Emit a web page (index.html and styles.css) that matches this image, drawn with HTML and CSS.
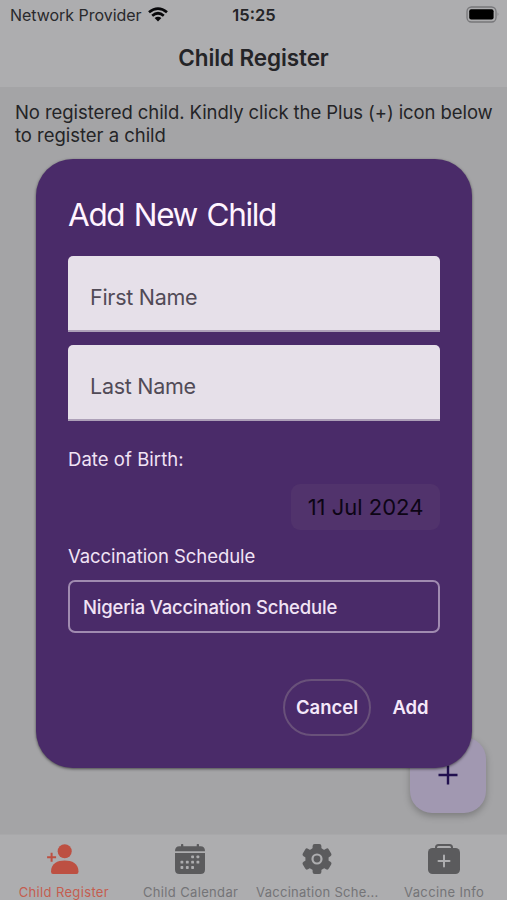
FILE: index.html
```html
<!DOCTYPE html>
<html lang="en">
<head>
<meta charset="utf-8">
<title>Child Register</title>
<link rel="stylesheet" href="styles.css">
</head>
<body>
<div class="app">
  <header class="header">
    <div class="status">
      <div class="carrier"><span class="carrier-name">Network Provider</span>
        <svg class="wifi" viewBox="0 0 20 15" width="20" height="15" fill="none" stroke="#08080a" stroke-width="2.7"><path d="M1 5.3Q10-2.2 19 5.3M4.2 8.7Q10 3.8 15.8 8.7"/><path d="M10 14.4L6.6 11Q10 8.3 13.4 11Z" fill="#08080a" stroke="none"/></svg>
      </div>
      <time class="clock">15:25</time>
      <svg class="battery" viewBox="0 0 34 17" width="34" height="17"><rect x="1" y="1" width="29" height="15" rx="4.5" fill="none" stroke="#77777a" stroke-width="1.3"/><rect x="3.2" y="3.3" width="24.4" height="10.2" rx="2" fill="#000"/><path d="M31.7 6.3Q33.4 8.3 31.7 10.3Z" fill="#77777a"/></svg>
    </div>
    <h1 class="title"><span>Child Register</span></h1>
  </header>
  <main class="content"><p class="empty"><span class="line1">No registered child. Kindly click the Plus (+) icon below</span><br><span class="line2">to register a child</span></p></main>
  <nav class="tabs">
    <a class="tab active"><svg viewBox="0 0 32 32" width="32" height="32" fill="currentColor"><circle cx="17.7" cy="8.2" r="7"/><path d="M4 28.5C4 20.5 10.5 17.5 17.7 17.5S31.500 20.500 31.500 28.500Q31.500 31 29.500 31H6Q4 31 4 28.500Z"/><path d="M4.600 9.800v9M.1 14.300h9" fill="none" stroke="currentColor" stroke-width="2"/></svg><span class="t1">Child Register</span></a>
    <a class="tab"><svg viewBox="0 0 32 32" width="32" height="32"><path fill="currentColor" d="M5.5 3.2H7V1.7q0-.7.8-.7h.8q.7 0 .7.7v1.500h13.400V1.700q0-.7.8-.7h.8q.7 0 .7.7v1.500H26.500q4.500 0 4.500 5H1q0-5 4.500-5ZM1 10h30v16.500q0 4.500-4.500 4.500h-21Q1 31 1 26.500Z"/><g fill="#adadaf"><rect x="17.2" y="12.5" width="2.8" height="2.8" rx=".7"/><rect x="22.5" y="12.5" width="2.8" height="2.8" rx=".7"/><rect x="6.5" y="17.8" width="2.8" height="2.8" rx=".7"/><rect x="11.9" y="17.8" width="2.8" height="2.8" rx=".7"/><rect x="17.2" y="17.8" width="2.8" height="2.8" rx=".7"/><rect x="22.5" y="17.8" width="2.8" height="2.8" rx=".7"/><rect x="6.5" y="23.1" width="2.8" height="2.8" rx=".7"/><rect x="11.9" y="23.1" width="2.8" height="2.8" rx=".7"/><rect x="17.2" y="23.1" width="2.8" height="2.8" rx=".7"/></g></svg><span class="t2">Child Calendar</span></a>
    <a class="tab"><svg viewBox="0 0 32 32" width="32" height="32"><circle cx="16" cy="16" r="11.6" fill="currentColor"/><g fill="currentColor"><rect id="tooth" x="11.6" y="1" width="8.8" height="30" rx="2"/><use href="#tooth" transform="rotate(60 16 16)"/><use href="#tooth" transform="rotate(120 16 16)"/></g><circle cx="16" cy="16" r="4.5" fill="none" stroke="#adadaf" stroke-width="2.2"/></svg><span class="t3">Vaccination Sche...</span></a>
    <a class="tab"><svg viewBox="0 0 32 32" width="32" height="32"><rect x="0" y="5" width="32" height="26" rx="4.5" fill="currentColor"/><path d="M8 6V4.500Q8 2 10.500 2h11Q24 2 24 4.500V6" fill="none" stroke="currentColor" stroke-width="2"/><path d="M16 12.500v11M10.500 18h11" stroke="#adadaf" stroke-width="2" stroke-linecap="round"/></svg><span class="t4">Vaccine Info</span></a>
  </nav>
  <button class="fab" aria-label="Register child"><svg viewBox="0 0 20 20" width="20" height="20" stroke="#21104f" stroke-width="2.4"><path d="M10 .5v19M.5 10h19"/></svg></button>
  <section class="dialog">
    <h2 class="heading"><span>Add New Child</span></h2>
    <div class="field"><span class="f1">First Name</span></div>
    <div class="field"><span class="f2">Last Name</span></div>
    <div class="label dob"><span>Date of Birth:</span></div>
    <div class="date"><span>11 Jul 2024</span></div>
    <div class="label schedule"><span>Vaccination Schedule</span></div>
    <div class="select"><span>Nigeria Vaccination Schedule</span></div>
    <div class="actions"><button class="cancel"><span>Cancel</span></button><button class="add"><span>Add</span></button></div>
  </section>
</div>
</body>
</html>
```
FILE: styles.css
```css
* { box-sizing: border-box; }
body { margin: 0; font-family: Inter, "Liberation Sans", sans-serif; }
h1, h2, p { margin: 0; font-weight: 400; }
button { font: inherit; border: 0; padding: 0; background: none; }
svg { display: block; flex: none; }
span { white-space: nowrap; }
.app { position: relative; width: 507px; height: 900px; overflow: hidden; display: flex; flex-direction: column; background: #a4a4a6; color: #242427; }
.header { height: 87px; background: #adadaf; }
.status { display: grid; grid-template-columns: 1fr auto 1fr; height: 30px; align-items: center; padding: 0 7px 0 10px; }
.carrier { display: flex; align-items: center; gap: 6px; font-size: 16px; letter-spacing: -.03px; color: #29292c; }
.carrier svg { margin-top: -2px; }
.clock { margin-left: -2px; font-size: 16.5px; font-weight: 600; line-height: 30px; }
.battery { justify-self: end; margin-top: -2px; }
.title { height: 56px; line-height: 56px; text-align: center; font-size: 22.5px; font-weight: 600; letter-spacing: -.1px; }
.content { flex: 1; padding: 14px 14px 0 15px; }
.empty { font-size: 18.5px; line-height: 23px; }
.line1 { letter-spacing: -.08px; }
.line2 { letter-spacing: -.03px; }
.tabs { height: 66px; background: #adadaf; border-top: 1px solid #a8a8aa; display: grid; grid-template-columns: repeat(4, 1fr); color: #5b5b5d; }
.tab { display: flex; flex-direction: column; align-items: center; padding-top: 8px; }
.tab span { font-size: 13px; line-height: 16px; margin: 9px 0 0 1px; color: #747477; letter-spacing: .35px; }
.tab .t3 { letter-spacing: .27px; }
.active { color: #bd5042; }
.tab.active span { color: #c45d50; }
.fab { position: absolute; left: 410px; top: 737px; width: 76px; height: 76px; border-radius: 22px; background: #a198b1; box-shadow: 0 3px 7px rgba(0,0,0,.25); display: flex; align-items: center; justify-content: center; }
.dialog { position: absolute; left: 36px; top: 159px; width: 436px; height: 609px; border-radius: 37px; padding: 34px 32px 0; background: #4a2b69; box-shadow: 0 1px 3px rgba(0,0,0,.55); color: #f1e3f5; }
.heading { height: 42px; line-height: 44px; font-size: 31.5px; letter-spacing: -1.35px; word-spacing: 2px; color: #fff4ff; margin-bottom: 21px; }
.field { height: 76px; padding: 8px 22px 0; margin-bottom: 13px; border-radius: 5px 5px 0 0; border-bottom: 2px solid #ada0b8; background: #e6e0e9; color: #514b57; font-size: 21.5px; letter-spacing: -.28px; display: flex; align-items: center; }
.label { font-size: 18.5px; line-height: 24px; }
.dob { margin-top: 26px; letter-spacing: .05px; }
.date { margin: 13px 0 0 auto; width: 149px; height: 46px; border-radius: 9px; background: #51336c; color: #0d0515; font-size: 22px; display: flex; align-items: center; justify-content: center; }
.schedule { margin-top: 14px; letter-spacing: -.07px; }
.select { margin-top: 12px; height: 53px; border: 2px solid #a08bb0; border-radius: 7px; padding-left: 13px; font-size: 18.5px; letter-spacing: -.2px; font-weight: 500; display: flex; align-items: center; }
.actions { display: flex; justify-content: flex-end; margin-top: 46px; gap: 12px; font-size: 18.5px; font-weight: 600; }
.actions button { color: #f5e8fa; height: 57px; padding-bottom: 1px; }
.cancel { width: 88px; }
.actions .cancel { border: 2px solid #69517a; border-radius: 29px; }
.actions .add { width: 57px; padding-right: 2px; }
.add span { letter-spacing: -.1px; }
```
